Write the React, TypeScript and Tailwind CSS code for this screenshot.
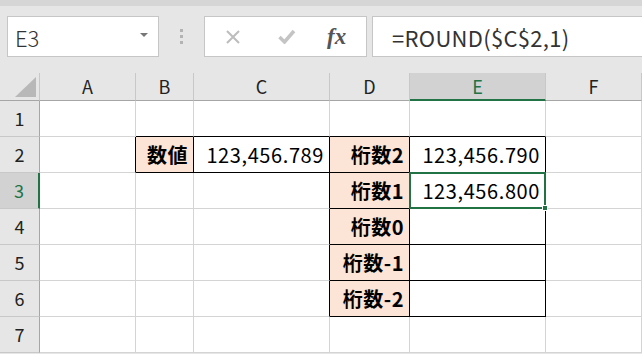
import React from "react";

const font = { fontFamily: '"Noto Sans CJK JP", "Noto Sans", sans-serif' };

const cols = ["A", "B", "C", "D", "E", "F"];
const colW = ["w-[96px]", "w-[58px]", "w-[136px]", "w-[80px]", "w-[136px]", "w-[96px]"];

type Cell = { text: string; label?: boolean };

// row index (1-based) -> column index -> cell
const data: Record<number, Record<number, Cell>> = {
  2: { 1: { text: "数値", label: true }, 2: { text: "123,456.789" }, 3: { text: "桁数2", label: true }, 4: { text: "123,456.790" } },
  3: { 3: { text: "桁数1", label: true }, 4: { text: "123,456.800" } },
  4: { 3: { text: "桁数0", label: true }, 4: { text: "" } },
  5: { 3: { text: "桁数-1", label: true }, 4: { text: "" } },
  6: { 3: { text: "桁数-2", label: true }, 4: { text: "" } },
};

const boxed = (r: number, c: number) => data[r]?.[c] !== undefined;

function FormulaBar() {
  return (
    <div className="h-[67px] flex items-start pt-[10px]">
      <div className="ml-[7px] w-[152px] h-[41px] bg-white border border-[#c6c6c6] flex items-center justify-between pl-[7px] pr-[10px]">
        <span className="text-[22px] font-light text-[#333] leading-none">E3</span>
        <span className="w-0 h-0 border-l-[4px] border-r-[4px] border-t-[4px] border-l-transparent border-r-transparent border-t-[#777] mb-[3px]" />
      </div>
      <div className="w-[45px] h-[41px] flex flex-col items-center justify-center gap-[3px]">
        <span className="w-[3px] h-[3px] bg-[#b3b3b3]" />
        <span className="w-[3px] h-[3px] bg-[#b3b3b3]" />
        <span className="w-[3px] h-[3px] bg-[#b3b3b3]" />
      </div>
      <div className="w-[163px] h-[41px] bg-white border border-[#c6c6c6] flex items-center">
        <svg width="14" height="14" viewBox="0 0 14 14" className="ml-[21px]">
          <path d="M1 1 L13 13 M13 1 L1 13" stroke="#bdbdbd" strokeWidth="2" />
        </svg>
        <svg width="18" height="15" viewBox="0 0 18 15" className="ml-[38px]">
          <path d="M1.5 8 L6.5 13 L16 2" stroke="#c4c4c4" strokeWidth="3.5" fill="none" />
        </svg>
        <span
          className="ml-[31px] text-[23px] italic font-bold text-[#555] leading-none"
          style={{ fontFamily: '"Liberation Serif", "DejaVu Serif", serif' }}
        >
          fx
        </span>
      </div>
      <div className="ml-[5px] flex-1 h-[41px] bg-white border border-[#c6c6c6] border-r-0 flex items-center pl-[19px]">
        <span className="text-[22px] text-[#333] leading-none tracking-[0.3px]">=ROUND($C$2,1)</span>
      </div>
    </div>
  );
}

function Grid() {
  return (
    <div className="flex flex-col">
      <div className="flex h-[28px]">
        <div className="w-[40px] h-full bg-[#e6e6e6] border-r border-b border-b-[#a6a6a6] border-r-[#c8c8c8] flex items-end justify-end pr-[3px] pb-[3px]">
          <svg width="21" height="20" viewBox="0 0 21 20">
            <path d="M21 0 L21 20 L0 20 Z" fill="#b8b8b8" />
          </svg>
        </div>
        {cols.map((c, i) => {
          const sel = c === "E";
          return (
            <div
              key={c}
              className={`${colW[i]} shrink-0 h-full flex items-center justify-center text-[18px] border-r border-r-[#c8c8c8] ${
                sel ? "bg-[#d2d2d2] text-[#217346] border-b-2 border-b-[#217346]" : "bg-[#e6e6e6] text-[#222] border-b border-b-[#a6a6a6]"
              }`}
            >
              {c}
            </div>
          );
        })}
      </div>
      {[1, 2, 3, 4, 5, 6, 7].map((r) => (
        <div key={r} className="flex h-[36px]">
          <div
            className={`w-[40px] shrink-0 h-full flex items-center justify-center text-[18px] border-b border-b-[#c8c8c8] ${
              r === 3 ? "bg-[#d2d2d2] text-[#217346] border-r-2 border-r-[#217346]" : "bg-[#e6e6e6] text-[#222] border-r border-r-[#a6a6a6]"
            }`}
          >
            {r}
          </div>
          {cols.map((c, i) => {
            const cell = data[r]?.[i];
            const right = boxed(r, i) || boxed(r, i + 1);
            const bottom = boxed(r, i) || boxed(r + 1, i);
            return (
              <div
                key={c}
                className={`${colW[i]} shrink-0 h-full border-r border-b flex items-center justify-end pr-[5px] text-[20px] text-black ${
                  right ? "border-r-black" : "border-r-[#d4d4d4]"
                } ${bottom ? "border-b-black" : "border-b-[#d4d4d4]"} ${
                  cell?.label ? "bg-[#fce4d6] font-bold tracking-[0.5px]" : "bg-white tracking-[0.6px]"
                }`}
              >
                {cell?.text}
              </div>
            );
          })}
        </div>
      ))}
    </div>
  );
}

export default function App() {
  return (
    <div className="w-[642px] h-[354px] overflow-hidden bg-[#e6e6e6] relative" style={font}>
      <div className="h-[6px] bg-[#d6d6d6]" />
      <FormulaBar />
      <Grid />
      {/* selection of E3 */}
      <div className="absolute left-[409px] top-[172px] w-[137px] h-[37px] border-2 border-[#217346] pointer-events-none" />
      <div className="absolute left-[542px] top-[205px] w-[6px] h-[6px] bg-[#217346] border border-white" />
    </div>
  );
}
